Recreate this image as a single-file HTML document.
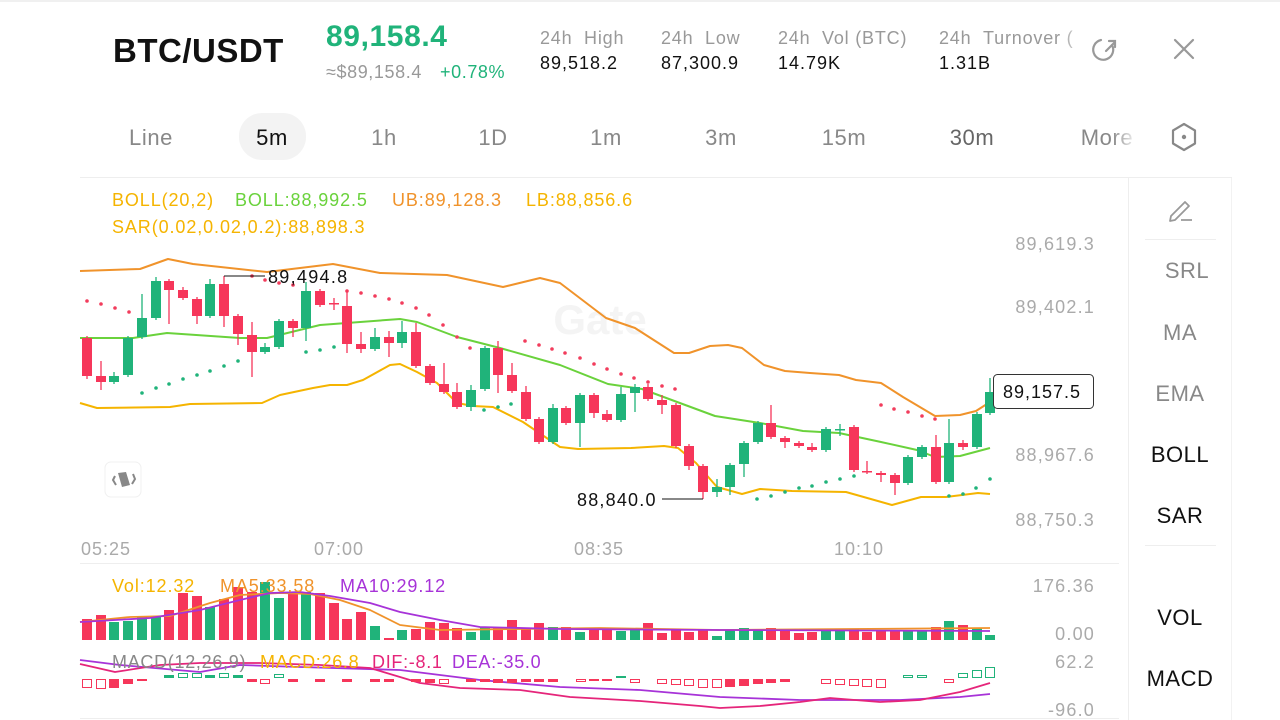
<!DOCTYPE html>
<html><head><meta charset="utf-8"><style>
html,body{margin:0;padding:0;background:#fff;width:1280px;height:720px;overflow:hidden}
svg{display:block;font-family:"Liberation Sans",Arial,sans-serif}
.c{letter-spacing:1px}
</style></head><body>
<svg width="1280" height="720" viewBox="0 0 1280 720" xmlns="http://www.w3.org/2000/svg">
<defs>
<linearGradient id="fade" x1="0" x2="1"><stop offset="0" stop-color="#fff" stop-opacity="0"/><stop offset="1" stop-color="#fff" stop-opacity="1"/></linearGradient>
</defs>
<line x1="0" y1="1" x2="1280" y2="1" stroke="#f0f0f0" stroke-width="2"/>
<!-- header -->
<text x="113" y="62" font-size="33" font-weight="bold" fill="#111" letter-spacing="0.5">BTC/USDT</text>
<text x="326" y="46" font-size="30" font-weight="bold" fill="#20b37a" letter-spacing="0.6">89,158.4</text>
<text x="326" y="78" font-size="18" fill="#999" letter-spacing="0.6">≈$89,158.4</text>
<text x="440" y="78" font-size="18" fill="#20b37a" letter-spacing="0.6">+0.78%</text>
<g font-size="18" fill="#999" letter-spacing="0.8">
<text x="540" y="44">24h&#160;&#160;High</text><text x="661" y="44">24h&#160;&#160;Low</text><text x="778" y="44">24h&#160;&#160;Vol (BTC)</text><text x="939" y="44">24h&#160;&#160;Turnover (</text>
</g>
<g font-size="18" fill="#111" letter-spacing="1">
<text x="540" y="69">89,518.2</text><text x="661" y="69">87,300.9</text><text x="778" y="69">14.79K</text><text x="939" y="69">1.31B</text>
</g>
<rect x="1060" y="20" width="30" height="60" fill="url(#fade)"/>
<rect x="1088" y="20" width="40" height="60" fill="#fff"/>
<g fill="none" stroke="#999" stroke-width="2.2" stroke-linecap="round">
<path d="M1112 45 A10 10 0 1 1 1101 40"/>
<path d="M1106 51 L1115 42 M1109 41 L1115 41 L1115 47"/>
<path d="M1175 40 L1193 58 M1193 40 L1175 58"/>
</g>
<!-- tabs -->
<rect x="239" y="113" width="67" height="47" rx="23" fill="#f3f3f3"/>
<g font-size="22" fill="#888" text-anchor="middle" letter-spacing="0.6">
<text x="151" y="145">Line</text>
<text x="272" y="145" fill="#111">5m</text>
<text x="384" y="145">1h</text>
<text x="493" y="145">1D</text>
<text x="606" y="145">1m</text>
<text x="721" y="145">3m</text>
<text x="844" y="145">15m</text>
<text x="972" y="145" fill="#666">30m</text>
<text x="1107" y="145">More</text>
</g>
<rect x="1112" y="115" width="26" height="40" fill="url(#fade)"/>
<path d="M1184 124 L1195 130.5 L1195 143.5 L1184 150 L1173 143.5 L1173 130.5 Z" fill="none" stroke="#888" stroke-width="2.2" stroke-linejoin="round"/>
<circle cx="1184" cy="137" r="2.2" fill="#888"/>
<!-- dividers -->
<line x1="80" y1="177.5" x2="1232" y2="177.5" stroke="#eee"/>
<line x1="1128.5" y1="178" x2="1128.5" y2="720" stroke="#eee"/>
<line x1="1231.5" y1="178" x2="1231.5" y2="720" stroke="#f2f2f2"/>
<line x1="1145" y1="239.5" x2="1216" y2="239.5" stroke="#eee"/>
<line x1="1145" y1="545.5" x2="1216" y2="545.5" stroke="#eee"/>
<line x1="80" y1="563.5" x2="1119" y2="563.5" stroke="#eee"/>
<line x1="80" y1="718.5" x2="1119" y2="718.5" stroke="#eee"/>
<!-- right panel -->
<path d="M1171 216 L1185 202 L1189 206 L1175 220 L1170 221 Z M1181 220 L1192 220" fill="none" stroke="#999" stroke-width="1.8" stroke-linejoin="round"/>
<g font-size="22" text-anchor="middle" letter-spacing="0.5">
<text x="1187" y="278" fill="#888">SRL</text>
<text x="1180" y="340" fill="#888">MA</text>
<text x="1180" y="401" fill="#888">EMA</text>
<text x="1180" y="462" fill="#111">BOLL</text>
<text x="1180" y="523" fill="#111">SAR</text>
<text x="1180" y="625" fill="#111">VOL</text>
<text x="1180" y="686" fill="#111">MACD</text>
</g>
<!-- legends -->
<g font-size="18" letter-spacing="0.9">
<text x="112" y="206" fill="#f5b400">BOLL(20,2)</text>
<text x="235" y="206" fill="#6ad23c">BOLL:88,992.5</text>
<text x="392" y="206" fill="#f0932b">UB:89,128.3</text>
<text x="526" y="206" fill="#f5b400">LB:88,856.6</text>
<text x="112" y="233" fill="#f5b400">SAR(0.02,0.02,0.2):88,898.3</text>
</g>
<text x="600" y="334" font-size="42" font-weight="bold" fill="#f4f4f4" text-anchor="middle">Gate</text>
<!-- y axis -->
<g font-size="18" fill="#aaa" text-anchor="end" letter-spacing="1.2">
<text x="1095" y="250">89,619.3</text>
<text x="1095" y="313">89,402.1</text>
<text x="1095" y="461">88,967.6</text>
<text x="1095" y="526">88,750.3</text>
<text x="1095" y="592">176.36</text>
<text x="1095" y="640">0.00</text>
<text x="1095" y="668">62.2</text>
<text x="1095" y="716">-96.0</text>
</g>
<g font-size="18" fill="#aaa" letter-spacing="1">
<text x="81" y="555">05:25</text><text x="314" y="555">07:00</text><text x="574" y="555">08:35</text><text x="834" y="555">10:10</text>
</g>
<!-- bands -->
<g fill="none" stroke-width="2" stroke-linejoin="round">
<polyline stroke="#f0932b" points="80,271 140,269 168,259 193,264 267,272 333,264 380,273 447,275 503,287 540,278 560,283 606,318 635,328 674,353 689,353 710,346 728,345 742,348 764,365 785,371 810,373 839,375 856,380 881,383 903,397 935,416 960,415 976,411 990,402"/>
<polyline stroke="#6ad23c" points="80,338 133,338 167,333 240,338 267,338 320,325 400,319 417,322 457,337 500,348 560,365 608,384 642,389 715,416 760,423 803,431 839,433 881,442 917,450 935,457 960,456 990,448"/>
<polyline stroke="#f5b400" points="80,403 97,408 170,407 190,404 262,403 280,395 313,388 330,385 347,385 363,380 390,365 400,364 417,372 437,383 457,403 473,406 493,407 523,422 560,447 578,449 631,448 664,446 678,448 696,463 717,487 742,494 760,489 792,491 846,492 892,505 921,497 946,497 978,493 990,494"/>
</g>
<!-- SAR -->
<g fill="#f23c5c">
<circle cx="87" cy="301" r="1.8"/><circle cx="101" cy="304" r="1.8"/><circle cx="115" cy="308" r="1.8"/><circle cx="129" cy="312" r="1.8"/>
<circle cx="252" cy="276" r="1.8"/><circle cx="265" cy="280" r="1.8"/><circle cx="279" cy="283" r="1.8"/><circle cx="293" cy="285" r="1.8"/>
<circle cx="347" cy="291" r="1.8"/><circle cx="361" cy="293" r="1.8"/><circle cx="375" cy="296" r="1.8"/><circle cx="389" cy="299" r="1.8"/><circle cx="402" cy="303" r="1.8"/><circle cx="416" cy="308" r="1.8"/><circle cx="429" cy="315" r="1.8"/><circle cx="443" cy="325" r="1.8"/><circle cx="457" cy="337" r="1.8"/><circle cx="470" cy="348" r="1.8"/>
<circle cx="525" cy="341" r="1.8"/><circle cx="539" cy="345" r="1.8"/><circle cx="552" cy="349" r="1.8"/>
<circle cx="565" cy="353" r="1.8"/><circle cx="580" cy="358" r="1.8"/><circle cx="594" cy="364" r="1.8"/><circle cx="607" cy="369" r="1.8"/><circle cx="621" cy="374" r="1.8"/><circle cx="634" cy="378" r="1.8"/><circle cx="648" cy="382" r="1.8"/><circle cx="662" cy="386" r="1.8"/><circle cx="675" cy="389" r="1.8"/>
<circle cx="881" cy="405" r="1.8"/><circle cx="894" cy="409" r="1.8"/><circle cx="908" cy="412" r="1.8"/><circle cx="922" cy="416" r="1.8"/><circle cx="935" cy="419" r="1.8"/>
</g>
<g fill="#20b37a">
<circle cx="142" cy="393" r="1.8"/><circle cx="156" cy="388" r="1.8"/><circle cx="169" cy="384" r="1.8"/><circle cx="183" cy="379" r="1.8"/><circle cx="197" cy="375" r="1.8"/><circle cx="210" cy="371" r="1.8"/><circle cx="224" cy="366" r="1.8"/><circle cx="238" cy="361" r="1.8"/>
<circle cx="306" cy="352" r="1.8"/><circle cx="320" cy="350" r="1.8"/><circle cx="334" cy="347" r="1.8"/>
<circle cx="484" cy="410" r="1.8"/><circle cx="498" cy="407" r="1.8"/><circle cx="511" cy="404" r="1.8"/>
<circle cx="757" cy="499" r="1.8"/><circle cx="771" cy="496" r="1.8"/><circle cx="785" cy="492" r="1.8"/><circle cx="799" cy="488" r="1.8"/><circle cx="812" cy="486" r="1.8"/><circle cx="826" cy="482" r="1.8"/><circle cx="840" cy="479" r="1.8"/><circle cx="854" cy="476" r="1.8"/>
<circle cx="949" cy="496" r="1.8"/><circle cx="963" cy="494" r="1.8"/><circle cx="976" cy="488" r="1.8"/><circle cx="990" cy="479" r="1.8"/>
</g>
<!-- candles red -->
<g fill="#f6365a" stroke="#f6365a" stroke-width="1.3">
<line x1="87" y1="336" x2="87" y2="379"/><rect x="82" y="338" width="10" height="38" stroke="none"/>
<line x1="101" y1="361" x2="101" y2="390"/><rect x="96" y="376" width="10" height="6" stroke="none"/>
<line x1="169" y1="279" x2="169" y2="324"/><rect x="164" y="281" width="10" height="9" stroke="none"/>
<line x1="183" y1="287" x2="183" y2="300"/><rect x="178" y="290" width="10" height="8" stroke="none"/>
<line x1="197" y1="297" x2="197" y2="324"/><rect x="192" y="299" width="10" height="17" stroke="none"/>
<line x1="224" y1="276" x2="224" y2="327"/><rect x="219" y="284" width="10" height="32" stroke="none"/>
<line x1="238" y1="314" x2="238" y2="345"/><rect x="233" y="316" width="10" height="18" stroke="none"/>
<line x1="252" y1="322" x2="252" y2="377"/><rect x="247" y="335" width="10" height="17" stroke="none"/>
<line x1="293" y1="319" x2="293" y2="337"/><rect x="288" y="321" width="10" height="7" stroke="none"/>
<line x1="320" y1="289" x2="320" y2="307"/><rect x="315" y="291" width="10" height="14" stroke="none"/>
<line x1="334" y1="298" x2="334" y2="310"/><rect x="329" y="303" width="10" height="1.5" stroke="none"/>
<line x1="347" y1="290" x2="347" y2="353"/><rect x="342" y="306" width="10" height="38" stroke="none"/>
<line x1="361" y1="332" x2="361" y2="353"/><rect x="356" y="344" width="10" height="5" stroke="none"/>
<line x1="389" y1="331" x2="389" y2="357"/><rect x="384" y="337" width="10" height="6" stroke="none"/>
<line x1="416" y1="323" x2="416" y2="368"/><rect x="411" y="332" width="10" height="34" stroke="none"/>
<line x1="430" y1="364" x2="430" y2="385"/><rect x="425" y="366" width="10" height="17" stroke="none"/>
<line x1="444" y1="363" x2="444" y2="394"/><rect x="439" y="384" width="10" height="8" stroke="none"/>
<line x1="457" y1="383" x2="457" y2="409"/><rect x="452" y="392" width="10" height="15" stroke="none"/>
<line x1="498" y1="341" x2="498" y2="393"/><rect x="493" y="348" width="10" height="27" stroke="none"/>
<line x1="512" y1="363" x2="512" y2="393"/><rect x="507" y="375" width="10" height="16" stroke="none"/>
<line x1="526" y1="386" x2="526" y2="421"/><rect x="521" y="392" width="10" height="27" stroke="none"/>
<line x1="539" y1="417" x2="539" y2="444"/><rect x="534" y="419" width="10" height="23" stroke="none"/>
<line x1="566" y1="406" x2="566" y2="425"/><rect x="561" y="408" width="10" height="15" stroke="none"/>
<line x1="594" y1="393" x2="594" y2="418"/><rect x="589" y="395" width="10" height="18" stroke="none"/>
<line x1="607" y1="410" x2="607" y2="422"/><rect x="602" y="414" width="10" height="6" stroke="none"/>
<line x1="648" y1="384" x2="648" y2="401"/><rect x="643" y="387" width="10" height="12" stroke="none"/>
<line x1="662" y1="395" x2="662" y2="414"/><rect x="657" y="400" width="10" height="5" stroke="none"/>
<line x1="676" y1="403" x2="676" y2="448"/><rect x="671" y="405" width="10" height="41" stroke="none"/>
<line x1="689" y1="444" x2="689" y2="470"/><rect x="684" y="446" width="10" height="20" stroke="none"/>
<line x1="703" y1="464" x2="703" y2="499"/><rect x="698" y="466" width="10" height="26" stroke="none"/>
<line x1="771" y1="405" x2="771" y2="439"/><rect x="766" y="423" width="10" height="14" stroke="none"/>
<line x1="785" y1="436" x2="785" y2="448"/><rect x="780" y="438" width="10" height="4" stroke="none"/>
<line x1="799" y1="441" x2="799" y2="448"/><rect x="794" y="443" width="10" height="3" stroke="none"/>
<line x1="812" y1="443" x2="812" y2="452"/><rect x="807" y="447" width="10" height="3" stroke="none"/>
<line x1="854" y1="425" x2="854" y2="472"/><rect x="849" y="427" width="10" height="43" stroke="none"/>
<line x1="867" y1="461" x2="867" y2="474"/><rect x="862" y="471" width="10" height="1.5" stroke="none"/>
<line x1="881" y1="471" x2="881" y2="482"/><rect x="876" y="473" width="10" height="2" stroke="none"/>
<line x1="895" y1="473" x2="895" y2="495"/><rect x="890" y="475" width="10" height="8" stroke="none"/>
<line x1="936" y1="435" x2="936" y2="484"/><rect x="931" y="447" width="10" height="35" stroke="none"/>
<line x1="963" y1="440" x2="963" y2="450"/><rect x="958" y="443" width="10" height="4" stroke="none"/>
</g>
<!-- candles green -->
<g fill="#20b37a" stroke="#20b37a" stroke-width="1.3">
<line x1="114" y1="372" x2="114" y2="384"/><rect x="109" y="376" width="10" height="6" stroke="none"/>
<line x1="128" y1="336" x2="128" y2="377"/><rect x="123" y="338" width="10" height="37" stroke="none"/>
<line x1="142" y1="294" x2="142" y2="339"/><rect x="137" y="318" width="10" height="19" stroke="none"/>
<line x1="156" y1="277" x2="156" y2="320"/><rect x="151" y="281" width="10" height="37" stroke="none"/>
<line x1="210" y1="279" x2="210" y2="318"/><rect x="205" y="284" width="10" height="32" stroke="none"/>
<line x1="265" y1="343" x2="265" y2="354"/><rect x="260" y="347" width="10" height="5" stroke="none"/>
<line x1="279" y1="319" x2="279" y2="349"/><rect x="274" y="321" width="10" height="26" stroke="none"/>
<line x1="306" y1="282" x2="306" y2="341"/><rect x="301" y="291" width="10" height="37" stroke="none"/>
<line x1="375" y1="328" x2="375" y2="351"/><rect x="370" y="337" width="10" height="12" stroke="none"/>
<line x1="402" y1="321" x2="402" y2="348"/><rect x="397" y="332" width="10" height="11" stroke="none"/>
<line x1="471" y1="385" x2="471" y2="411"/><rect x="466" y="390" width="10" height="17" stroke="none"/>
<line x1="485" y1="346" x2="485" y2="391"/><rect x="480" y="348" width="10" height="41" stroke="none"/>
<line x1="553" y1="404" x2="553" y2="444"/><rect x="548" y="408" width="10" height="34" stroke="none"/>
<line x1="580" y1="393" x2="580" y2="447"/><rect x="575" y="395" width="10" height="28" stroke="none"/>
<line x1="621" y1="387" x2="621" y2="422"/><rect x="616" y="394" width="10" height="26" stroke="none"/>
<line x1="635" y1="384" x2="635" y2="412"/><rect x="630" y="387" width="10" height="6" stroke="none"/>
<line x1="717" y1="479" x2="717" y2="497"/><rect x="712" y="487" width="10" height="5" stroke="none"/>
<line x1="730" y1="463" x2="730" y2="495"/><rect x="725" y="465" width="10" height="22" stroke="none"/>
<line x1="744" y1="441" x2="744" y2="477"/><rect x="739" y="443" width="10" height="21" stroke="none"/>
<line x1="758" y1="421" x2="758" y2="444"/><rect x="753" y="423" width="10" height="19" stroke="none"/>
<line x1="826" y1="427" x2="826" y2="452"/><rect x="821" y="429" width="10" height="21" stroke="none"/>
<line x1="840" y1="424" x2="840" y2="436"/><rect x="835" y="429" width="10" height="1.5" stroke="none"/>
<line x1="908" y1="455" x2="908" y2="485"/><rect x="903" y="457" width="10" height="26" stroke="none"/>
<line x1="922" y1="445" x2="922" y2="459"/><rect x="917" y="447" width="10" height="10" stroke="none"/>
<line x1="949" y1="419" x2="949" y2="484"/><rect x="944" y="443" width="10" height="39" stroke="none"/>
<line x1="977" y1="412" x2="977" y2="449"/><rect x="972" y="414" width="10" height="33" stroke="none"/>
<line x1="990" y1="378" x2="990" y2="415"/><rect x="985" y="392" width="10" height="21" stroke="none"/>
</g>
<!-- annotations -->
<line x1="224" y1="276" x2="265" y2="276" stroke="#111" stroke-width="1"/>
<text x="268" y="283" font-size="18" fill="#111" letter-spacing="1.3">89,494.8</text>
<line x1="662" y1="499" x2="703" y2="499" stroke="#111" stroke-width="1"/>
<text x="577" y="506" font-size="18" fill="#111" letter-spacing="1.2">88,840.0</text>
<rect x="993.5" y="374.5" width="100" height="34" rx="4" fill="#fff" stroke="#333"/>
<text x="1042" y="398" font-size="18" fill="#111" text-anchor="middle" letter-spacing="1">89,157.5</text>
<!-- small button -->
<rect x="105" y="462" width="36" height="35" rx="6" fill="#fff" stroke="#f0f0f0"/>
<g fill="#888"><path d="M118 473 L126 472 L130 485 L122 487 Z"/><path d="M115 476 L113 480 L116 485" fill="none" stroke="#888" stroke-width="2"/><path d="M133 474 L135 479 L132 484" fill="none" stroke="#888" stroke-width="2"/></g>
<!-- volume bars -->
<g fill="#f6365a">
<rect x="82" y="619" width="10" height="21"/><rect x="96" y="615" width="10" height="25"/>
<rect x="164" y="610" width="10" height="30"/><rect x="178" y="593" width="10" height="47"/><rect x="192" y="596" width="10" height="44"/>
<rect x="219" y="599" width="10" height="41"/><rect x="233" y="587" width="10" height="53"/><rect x="247" y="592" width="10" height="48"/>
<rect x="288" y="592" width="10" height="48"/><rect x="315" y="593" width="10" height="47"/><rect x="329" y="603" width="10" height="37"/>
<rect x="342" y="619" width="10" height="21"/><rect x="356" y="612" width="10" height="28"/><rect x="384" y="638" width="10" height="2"/>
<rect x="411" y="629" width="10" height="11"/><rect x="425" y="622" width="10" height="18"/><rect x="439" y="623" width="10" height="17"/><rect x="452" y="628" width="10" height="12"/>
<rect x="493" y="628" width="10" height="12"/><rect x="507" y="620" width="10" height="20"/><rect x="521" y="628" width="10" height="12"/><rect x="534" y="623" width="10" height="17"/>
<rect x="561" y="627" width="10" height="13"/><rect x="589" y="629" width="10" height="11"/><rect x="602" y="628" width="10" height="12"/>
<rect x="643" y="623" width="10" height="17"/><rect x="657" y="633" width="10" height="7"/><rect x="671" y="629" width="10" height="11"/><rect x="684" y="632" width="10" height="8"/><rect x="698" y="630" width="10" height="10"/>
<rect x="766" y="628" width="10" height="12"/><rect x="780" y="631" width="10" height="9"/><rect x="794" y="633" width="10" height="7"/><rect x="807" y="632" width="10" height="8"/>
<rect x="849" y="629" width="10" height="11"/><rect x="862" y="632" width="10" height="8"/><rect x="876" y="631" width="10" height="9"/><rect x="890" y="630" width="10" height="10"/>
<rect x="931" y="627" width="10" height="13"/><rect x="958" y="625" width="10" height="15"/>
</g>
<g fill="#20b37a">
<rect x="109" y="622" width="10" height="18"/><rect x="123" y="621" width="10" height="19"/><rect x="137" y="616" width="10" height="24"/><rect x="151" y="617" width="10" height="23"/>
<rect x="205" y="607" width="10" height="33"/><rect x="260" y="582" width="10" height="58"/><rect x="274" y="598" width="10" height="42"/><rect x="301" y="592" width="10" height="48"/>
<rect x="370" y="626" width="10" height="14"/><rect x="397" y="630" width="10" height="10"/><rect x="466" y="632" width="10" height="8"/><rect x="480" y="627" width="10" height="13"/>
<rect x="548" y="627" width="10" height="13"/><rect x="575" y="632" width="10" height="8"/><rect x="616" y="631" width="10" height="9"/><rect x="630" y="630" width="10" height="10"/>
<rect x="712" y="636" width="10" height="4"/><rect x="725" y="630" width="10" height="10"/><rect x="739" y="628" width="10" height="12"/><rect x="753" y="629" width="10" height="11"/>
<rect x="821" y="630" width="10" height="10"/><rect x="835" y="631" width="10" height="9"/><rect x="903" y="631" width="10" height="9"/><rect x="917" y="630" width="10" height="10"/>
<rect x="944" y="621" width="10" height="19"/><rect x="972" y="628" width="10" height="12"/><rect x="985" y="635" width="10" height="5"/>
</g>
<g fill="none" stroke-width="1.8" stroke-linejoin="round">
<polyline stroke="#f0932b" points="80,622 130,617 170,616 210,603 240,595 280,593 310,594 340,600 370,610 400,625 440,630 520,629 600,628 720,630 850,629 990,628"/>
<polyline stroke="#a733d8" points="80,622 150,618 200,610 240,600 270,593 300,592 330,596 370,603 400,612 440,620 480,627 560,629 720,630 990,631"/>
</g>
<g font-size="18" letter-spacing="0.9">
<text x="112" y="592" fill="#f5b400">Vol:12.32</text>
<text x="220" y="592" fill="#f0932b">MA5:33.58</text>
<text x="340" y="592" fill="#a733d8">MA10:29.12</text>
</g>
<!-- MACD -->
<g fill="none" stroke-width="1.8" stroke-linejoin="round">
<polyline stroke="#a733d8" points="80,660 120,665 200,672 240,665 300,667 400,670 480,680 560,687 640,690 720,697 800,700 900,700 960,697 990,694"/>
<polyline stroke="#e5257a" points="80,664 115,672 160,665 200,663 260,663 320,665 370,668 420,683 460,688 520,690 570,697 640,701 700,706 720,708 760,706 800,702 830,698 880,702 920,700 960,692 990,683"/>
</g>
<g fill="none" stroke="#f6365a" stroke-width="1">
<rect x="82.5" y="679.5" width="9" height="8"/><rect x="96.5" y="679.5" width="9" height="9"/>
<rect x="260.5" y="679.5" width="9" height="4"/><rect x="439.5" y="679.5" width="9" height="4"/>
<rect x="576.5" y="679.5" width="9" height="2"/><rect x="630.5" y="679.5" width="9" height="3"/>
<rect x="657.5" y="679.5" width="9" height="4"/><rect x="671.5" y="679.5" width="9" height="5"/><rect x="684.5" y="679.5" width="9" height="6"/><rect x="698.5" y="679.5" width="9" height="8"/><rect x="712.5" y="679.5" width="9" height="8"/>
<rect x="821.5" y="679.5" width="9" height="4"/><rect x="835.5" y="679.5" width="9" height="5"/><rect x="849.5" y="679.5" width="9" height="6"/><rect x="862.5" y="679.5" width="9" height="7"/><rect x="876.5" y="679.5" width="9" height="8"/>
<rect x="944.5" y="679.5" width="9" height="3"/>
</g>
<g fill="#f6365a">
<rect x="109" y="679" width="10" height="9"/><rect x="123" y="679" width="10" height="5"/><rect x="137" y="679" width="10" height="2"/>
<rect x="247" y="679" width="10" height="3"/><rect x="288" y="679" width="10" height="3"/><rect x="315" y="679" width="10" height="3"/><rect x="342" y="679" width="10" height="3"/>
<rect x="370" y="679" width="10" height="3"/><rect x="384" y="679" width="10" height="3"/><rect x="411" y="679" width="10" height="3"/><rect x="425" y="679" width="10" height="4"/>
<rect x="466" y="679" width="10" height="3"/><rect x="480" y="679" width="10" height="3"/><rect x="493" y="679" width="10" height="4"/><rect x="507" y="679" width="10" height="4"/><rect x="521" y="679" width="10" height="3"/><rect x="534" y="679" width="10" height="3"/><rect x="548" y="679" width="10" height="3"/>
<rect x="589" y="679" width="10" height="2"/><rect x="602" y="679" width="10" height="2"/>
<rect x="725" y="679" width="10" height="8"/><rect x="739" y="679" width="10" height="7"/><rect x="753" y="679" width="10" height="5"/><rect x="766" y="679" width="10" height="4"/><rect x="780" y="679" width="10" height="3"/>
</g>
<g fill="#20b37a">
<rect x="164" y="675" width="10" height="3"/><rect x="205" y="675" width="10" height="3"/><rect x="233" y="675" width="10" height="3"/><rect x="616" y="676" width="10" height="2"/>
</g>
<g fill="none" stroke="#20b37a" stroke-width="1">
<rect x="178.5" y="673.5" width="9" height="4"/><rect x="192.5" y="673.5" width="9" height="4"/><rect x="219.5" y="673.5" width="9" height="4"/><rect x="274.5" y="674.5" width="9" height="3"/>
<rect x="903.5" y="675.5" width="9" height="2"/><rect x="917.5" y="675.5" width="9" height="2"/><rect x="958.5" y="673.5" width="9" height="4"/><rect x="972.5" y="670.5" width="9" height="7"/><rect x="985.5" y="667.5" width="9" height="10"/>
</g>
<g font-size="18" letter-spacing="0.7">
<text x="112" y="668" fill="#888">MACD(12,26,9)</text>
<text x="260" y="668" fill="#f5b400">MACD:26.8</text>
<text x="372" y="668" fill="#e5257a">DIF:-8.1</text>
<text x="452" y="668" fill="#a733d8">DEA:-35.0</text>
</g>
</svg>
</body></html>
